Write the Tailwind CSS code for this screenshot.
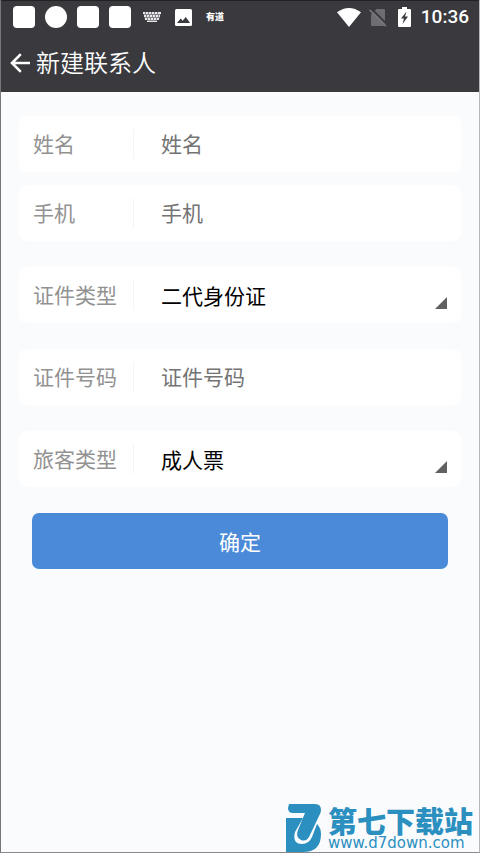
<!DOCTYPE html>
<html lang="zh-CN">
<head>
<meta charset="utf-8">
<meta name="viewport" content="width=device-width, initial-scale=1">
<title>新建联系人</title>
<script src="https://cdn.jsdelivr.net/npm/@tailwindcss/browser@4"></script>
</head>
<body class="relative flex min-h-screen flex-col overflow-x-hidden border-b border-l border-r border-b-[#8a8a8c] border-l-[#77777a] border-r-[#b8b8ba] bg-[#fafbfd] font-['Noto_Sans_CJK_SC',sans-serif]">
<header class="-mx-px border-t border-[#222225] bg-[#39393e] text-white">
  <!-- Status bar -->
  <div class="flex h-8 items-center justify-between pl-[13px] pr-[11px]">
    <div class="flex items-center gap-[10px]">
      <span class="size-[22px] rounded bg-white"></span>
      <span class="size-[22px] rounded-full bg-white"></span>
      <span class="size-[22px] rounded bg-white"></span>
      <span class="size-[22px] rounded bg-white"></span>
      <svg class="ml-0.5 h-[10px] w-[18px]" viewBox="0 0 18 10" aria-hidden="true">
        <path d="M0 0h18l-2 8h-2v2H4V8H2z" fill="#85858a"/>
        <path fill="#e8e8ea" d="M0 0h2v2H0zM3 0h2v2H3zM6 0h2v2H6zM9 0h2v2H9zM12 0h2v2h-2zM15 0h3v2h-3zM1 3h2v2H1zM4 3h2v2H4zM7 3h2v2H7zM10 3h2v2h-2zM13 3h2v2h-2zM16 3h1v2h-1zM2 6h2v2H2zM5 6h2v2H5zM8 6h2v2H8zM11 6h2v2h-2zM14 6h2v2h-2zM4 9h10v1H4z"/>
      </svg>
      <svg class="ml-1 size-[17px]" viewBox="0 0 17 17" aria-hidden="true">
        <rect width="17" height="17" rx="1.5" fill="#fff"/>
        <path d="M2 14l3.700-4.500 2 2.300L10.800 8 15 14z" fill="#39393e"/>
      </svg>
      <span class="ml-1 text-[9px] leading-3 font-black">有道</span>
    </div>
    <div class="flex items-center">
      <svg class="h-[19px] w-6" viewBox="0 0 24 19" fill="#fff" aria-hidden="true"><path d="M0 4.300Q12-4.300 24 4.300L12 19z"/></svg>
      <svg class="ml-2 h-[19px] w-[18px]" viewBox="0 0 18 19" aria-hidden="true">
        <path d="M7.500 1H15q1 0 1 1v15q0 1-1 1H3q-1 0-1-1V6.500z" fill="#6e6e72"/>
        <path d="M1.500-.2L18 16.300" stroke="#39393e" stroke-width="2"/>
        <path d="M.5 1.800L17 18.300" stroke="#77777b" stroke-width="1.600"/>
      </svg>
      <svg class="ml-[11px] h-5 w-[13px]" viewBox="0 0 13 20" aria-hidden="true">
        <path d="M4 0h5v2h3q1 0 1 1v16q0 1-1 1H1q-1 0-1-1V3q0-1 1-1h3z" fill="#fff"/>
        <path d="M8.500 4.500L3 11.500h3L4.500 17 10 9.500H7z" fill="#39393e"/>
      </svg>
      <time class="ml-[10px] font-['Roboto',sans-serif] text-[19px] leading-6 font-medium">10:36</time>
    </div>
  </div>
  <!-- Title bar -->
  <div class="flex h-[59px] items-center pl-[10px]">
    <a href="#" aria-label="返回" class="flex size-5 items-center">
      <svg class="size-5" viewBox="0 0 20 20" fill="none" stroke="#fff" stroke-width="2.600" aria-hidden="true"><path d="M20 10H2M10.800 1.200L2 10l8.800 8.800"/></svg>
    </a>
    <h1 class="ml-[6px] pb-0.5 text-[24px] leading-8 font-[350]">新建联系人</h1>
  </div>
</header>

<main class="flex-1 px-[18px] pt-6 pb-16">
  <form class="text-[21px] leading-8">
    <div class="mb-[13px] flex h-14 items-center rounded-lg bg-white px-3.5">
      <label for="name" class="w-[100px] shrink-0 pb-0.5 text-[#929292]">姓名</label>
      <span class="mr-[27px] h-[30px] w-px shrink-0 bg-[#f4f4f5]"></span>
      <input id="name" type="text" placeholder="姓名" class="h-8 min-w-0 flex-1 pb-0.5 text-black outline-none placeholder:text-[#747474]">
    </div>
    <div class="mb-[26px] flex h-14 items-center rounded-lg bg-white px-3.5">
      <label for="phone" class="w-[100px] shrink-0 pb-0.5 text-[#929292]">手机</label>
      <span class="mr-[27px] h-[30px] w-px shrink-0 bg-[#f4f4f5]"></span>
      <input id="phone" type="tel" placeholder="手机" class="h-8 min-w-0 flex-1 pb-0.5 text-black outline-none placeholder:text-[#747474]">
    </div>
    <div class="mb-[26px] flex h-14 items-center rounded-lg bg-white px-3.5">
      <label for="idtype" class="w-[100px] shrink-0 pb-0.5 text-[#929292]">证件类型</label>
      <span class="mr-[27px] h-[30px] w-px shrink-0 bg-[#f4f4f5]"></span>
      <select id="idtype" class="h-8 min-w-0 flex-1 appearance-none pb-0.5 text-black outline-none"><option>二代身份证</option></select>
      <svg class="pointer-events-none mt-4 size-3 shrink-0" viewBox="0 0 12 12" fill="#606060" aria-hidden="true"><path d="M12 0v12H0z"/></svg>
    </div>
    <div class="mb-[26px] flex h-14 items-center rounded-lg bg-white px-3.5">
      <label for="idno" class="w-[100px] shrink-0 pb-0.5 text-[#929292]">证件号码</label>
      <span class="mr-[27px] h-[30px] w-px shrink-0 bg-[#f4f4f5]"></span>
      <input id="idno" type="text" placeholder="证件号码" class="h-8 min-w-0 flex-1 pb-0.5 text-black outline-none placeholder:text-[#747474]">
    </div>
    <div class="mb-[26px] flex h-14 items-center rounded-lg bg-white px-3.5">
      <label for="ptype" class="w-[100px] shrink-0 pb-0.5 text-[#929292]">旅客类型</label>
      <span class="mr-[27px] h-[30px] w-px shrink-0 bg-[#f4f4f5]"></span>
      <select id="ptype" class="h-8 min-w-0 flex-1 appearance-none pb-0.5 text-black outline-none"><option>成人票</option></select>
      <svg class="pointer-events-none mt-4 size-3 shrink-0" viewBox="0 0 12 12" fill="#606060" aria-hidden="true"><path d="M12 0v12H0z"/></svg>
    </div>
    <div class="px-[13px]">
      <button type="button" class="h-14 w-full rounded-[7px] bg-[#4b8ad8] text-white">确定</button>
    </div>
  </form>
</main>

<!-- Site watermark -->
<div class="absolute right-1.5 bottom-0 flex items-end gap-[7px] text-[#2b8fc0]">
  <svg class="h-12 w-[35px]" viewBox="0 0 35 48" fill="#2b8fc0" aria-hidden="true">
    <path d="M0 14h17L9 28q-3 12 7 12 7 0 10-7l5-13q4 4 4 10 0 18-18 18H0z"/>
    <path d="M3 0h26q6 0 6 6 0 3-2 6L23 33q-3 5-8 3-6-3-3-10L19 9H7Q2 9 2 4z"/>
  </svg>
  <div>
    <p class="text-[29px] leading-[30px] font-black">第七下载站</p>
    <p class="font-['DejaVu_Sans',sans-serif] text-[15px] leading-[17px]">www.d7down.com</p>
  </div>
</div>
</body>
</html>
